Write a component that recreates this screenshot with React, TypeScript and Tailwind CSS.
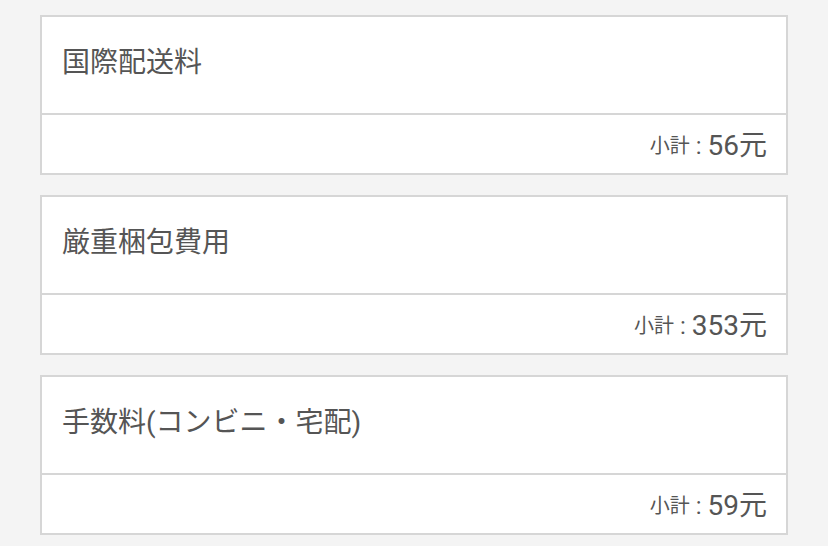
const fees = [
  { name: "国際配送料", subtotal: "56" },
  { name: "厳重梱包費用", subtotal: "353" },
  { name: "手数料(コンビニ・宅配)", subtotal: "59" },
];

export default function App() {
  return (
    <div
      className="min-h-[546px] bg-[#f4f4f4] px-10 pt-[15px] text-[#555555]"
      style={{ fontFamily: 'Roboto, "Noto Sans CJK JP", sans-serif' }}
    >
      <div className="flex flex-col gap-5">
        {fees.map((fee) => (
          <div key={fee.name} className="border-2 border-[#d6d6d6] bg-white">
            <div className="flex h-[96px] items-center px-5 pb-1 text-[28px]">{fee.name}</div>
            <div className="flex h-[60px] items-center justify-end border-t-2 border-[#d6d6d6] px-[19px] pt-1">
              <span className="text-[20px]">小計</span>
              <span className="mx-[6px] text-[24px] leading-none">:</span>
              <span className="text-[28px]">{fee.subtotal}元</span>
            </div>
          </div>
        ))}
      </div>
    </div>
  );
}
